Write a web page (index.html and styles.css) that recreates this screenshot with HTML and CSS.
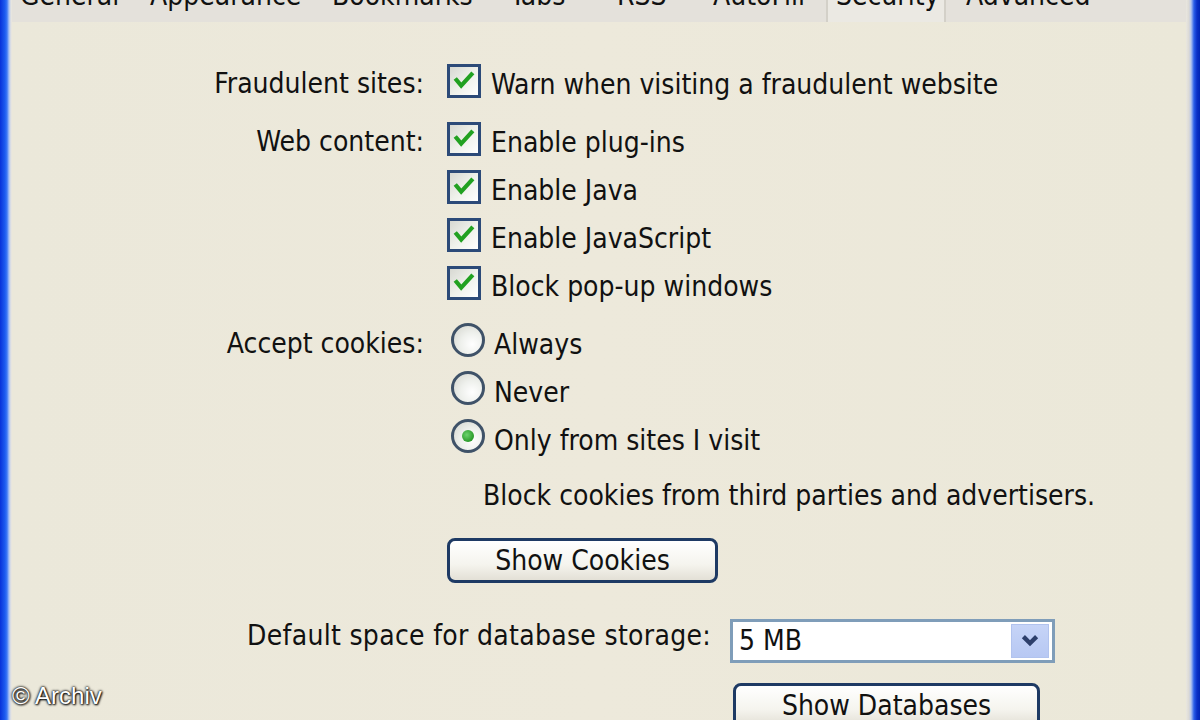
FILE: index.html
```html
<!DOCTYPE html>
<html>
<head>
<meta charset="utf-8">
<link rel="stylesheet" href="styles.css">
</head>
<body>
<div class="frame">
  <div class="frame-edge left"></div>
  <div class="dialog">
    <div class="tabs">
      <span class="tab">General</span>
      <span class="tab">Appearance</span>
      <span class="tab">Bookmarks</span>
      <span class="tab">Tabs</span>
      <span class="tab">RSS</span>
      <span class="tab">AutoFill</span>
      <span class="tab selected">Security</span>
      <span class="tab last">Advanced</span>
    </div>
    <div class="panel">
      <div class="form">
        <div class="label first">Fraudulent sites:</div>
        <div class="controls first">
          <div class="opt"><span class="check"><svg viewBox="0 0 28 28"><path d="M6 13 L11 19 L22 7" /></svg></span>Warn when visiting a fraudulent website</div>
        </div>

        <div class="label">Web content:</div>
        <div class="controls">
          <div class="opt"><span class="check"><svg viewBox="0 0 28 28"><path d="M6 13 L11 19 L22 7" /></svg></span>Enable plug-ins</div>
          <div class="opt"><span class="check"><svg viewBox="0 0 28 28"><path d="M6 13 L11 19 L22 7" /></svg></span>Enable Java</div>
          <div class="opt"><span class="check"><svg viewBox="0 0 28 28"><path d="M6 13 L11 19 L22 7" /></svg></span>Enable JavaScript</div>
          <div class="opt"><span class="check"><svg viewBox="0 0 28 28"><path d="M6 13 L11 19 L22 7" /></svg></span>Block pop-up windows</div>
        </div>

        <div class="label cookies">Accept cookies:</div>
        <div class="controls cookies">
          <div class="opt"><span class="radio"></span>Always</div>
          <div class="opt"><span class="radio"></span>Never</div>
          <div class="opt"><span class="radio on"><span class="dot"></span></span>Only from sites I visit</div>
          <div class="note">Block cookies from third parties and advertisers.</div>
          <div class="btn cookies-btn">Show Cookies</div>
        </div>
      </div>

      <div class="db-row">
        <div class="db-label">Default space for database storage:</div>
        <div class="db-controls">
          <div class="select">
            <span class="select-value">5 MB</span>
            <span class="select-arrow"><svg viewBox="0 0 20 16"><path d="M4 4 L10 10 L16 4" /></svg></span>
          </div>
          <div class="btn db-btn">Show Databases</div>
        </div>
      </div>
    </div>
  </div>
  <div class="frame-edge right"></div>
  <div class="watermark">© Archiv</div>
</div>
</body>
</html>
```

FILE: styles.css
```css
* { box-sizing: border-box; }
html, body { margin: 0; padding: 0; }
body {
  width: 1200px;
  height: 720px;
  overflow: hidden;
  font-family: "DejaVu Sans Condensed", "DejaVu Sans", sans-serif;
  font-size: 28px;
  color: #111;
  background: #ece9d8;
}
.frame {
  position: relative;
  display: flex;
  width: 1200px;
  height: 720px;
}
.frame-edge { flex: none; height: 100%; }
.frame-edge.left {
  width: 12px;
  background: linear-gradient(to right, #0831d9 0, #1d5bf0 5px, #3e78f5 7px, #a9c1f5 9px, #e7e5df 11px);
}
.frame-edge.right {
  width: 14px;
  background: linear-gradient(to right, #e9e7e0 0, #dcdad5 3px, #b5c6ef 5px, #2a5ee8 8px, #0a2fc7 11px, #0024b4 14px);
}
.dialog {
  flex: 1;
  display: flex;
  flex-direction: column;
  min-width: 0;
}
.tabs {
  height: 22px;
  flex: none;
  display: grid;
  grid-template-columns: 130px 182px 178px 107px 96px 113px 120px 1fr;
  background: #e4e1db;
  overflow: hidden;
  padding-left: 8px;
}
.tab {
  line-height: 28px;
  margin-top: -18px;
  height: 40px;
  white-space: nowrap;
}
.tab.selected {
  background: #ebe9e3;
  border-left: 2px solid #d3d0c8;
  border-right: 2px solid #d3d0c8;
  padding-left: 8px;
}
.tab.last { padding-left: 20px; }
.panel {
  flex: 1;
  background: linear-gradient(to right, #ebe8da, #ede9db 50%, #ebe8d9);
}
.form {
  display: grid;
  grid-template-columns: 412px auto;
  column-gap: 23px;
  padding-top: 38px;
}
.label {
  text-align: right;
  line-height: 48px;
  white-space: nowrap;
}
.label.first { height: 48px; }
.controls { display: flex; flex-direction: column; }
.controls.first { margin-bottom: 10px; }
.label.cookies { margin-top: 10px; }
.controls.cookies { margin-top: 10px; }
.opt {
  display: flex;
  align-items: center;
  height: 48px;
  white-space: nowrap;
}
.check {
  width: 34px;
  height: 34px;
  margin-right: 10px;
  border: 3px solid #2c4a78;
  background: linear-gradient(135deg, #d7d8d2 0%, #eef0ea 50%, #ffffff 100%);
  display: flex;
  align-items: center;
  justify-content: center;
  flex: none;
  margin-top: -6px;
}
.check svg { width: 26px; height: 26px; }
.check path {
  fill: none;
  stroke: #21a121;
  stroke-width: 4.5;
  stroke-linecap: square;
}
.radio {
  width: 34px;
  height: 34px;
  border-radius: 50%;
  border: 3px solid #3f5268;
  background: radial-gradient(circle at 65% 65%, #ffffff 0%, #eef0ec 45%, #d2d3cc 100%);
  margin-left: 4px;
  margin-right: 9px;
  flex: none;
  margin-top: -8px;
  display: flex;
  align-items: center;
  justify-content: center;
}
.radio .dot {
  width: 12px;
  height: 12px;
  border-radius: 50%;
  background: radial-gradient(circle at 40% 40%, #6dd36d 0%, #2a9a2a 70%);
}
.note {
  margin-top: 14px;
  margin-left: 36px;
  line-height: 36px;
  white-space: nowrap;
}
.btn {
  height: 45px;
  border: 3px solid #1e3a64;
  border-radius: 8px;
  background: linear-gradient(to bottom, #ffffff 0%, #f5f4ee 60%, #e3e0d6 100%);
  display: flex;
  align-items: center;
  justify-content: center;
  white-space: nowrap;
}
.cookies-btn {
  width: 271px;
  margin-top: 24px;
}
.db-row {
  display: flex;
  margin-top: 36px;
  padding-left: 235px;
}
.db-label {
  line-height: 42px;
  margin-right: 19px;
  white-space: nowrap;
  margin-top: -4px;
  letter-spacing: 0.3px;
}
.db-controls {
  display: flex;
  flex-direction: column;
}
.select {
  width: 325px;
  height: 44px;
  border: 3px solid #7f9db9;
  background: #fff;
  display: flex;
  align-items: center;
  justify-content: space-between;
  padding-left: 6px;
  padding-right: 3px;
}
.select-value { line-height: 38px; }
.select-arrow {
  width: 38px;
  height: 34px;
  background: linear-gradient(to bottom, #c6d4f7, #b7c8f3);
  border: 1px solid #b1c3ee;
  display: flex;
  align-items: center;
  justify-content: center;
}
.select-arrow svg { width: 22px; height: 18px; }
.select-arrow path {
  fill: none;
  stroke: #2d3f6b;
  stroke-width: 4;
}
.db-btn {
  width: 307px;
  margin-top: 20px;
  margin-left: 3px;
}
.watermark {
  position: absolute;
  left: 12px;
  top: 682px;
  font-family: "Liberation Sans", Arial, sans-serif;
  font-size: 24px;
  color: #fff;
  text-shadow: 0 0 2px #000, 0 0 3px #000, 1px 1px 2px #222;
  white-space: nowrap;
}
```
